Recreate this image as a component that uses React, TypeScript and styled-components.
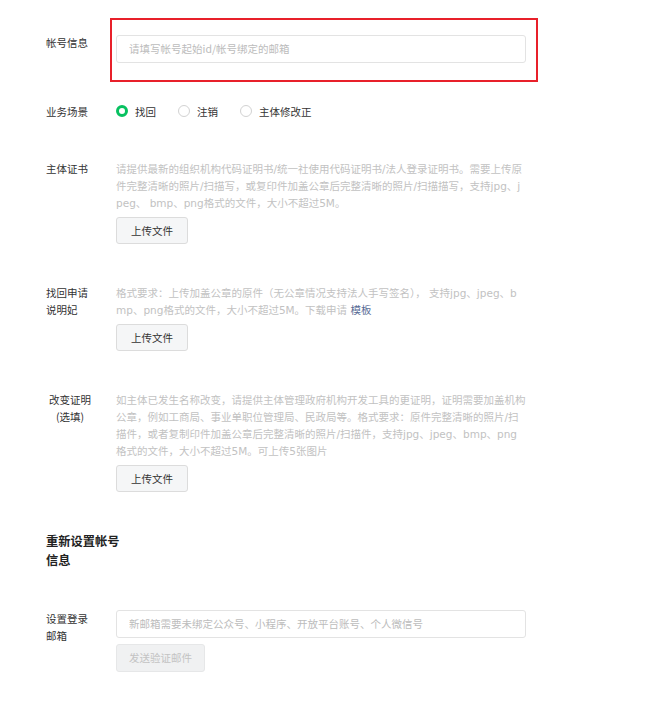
import React, { useState } from 'react';
import styled, { createGlobalStyle } from 'styled-components';

const GlobalStyle = createGlobalStyle`
  body {
    margin: 0;
    background: #fff;
    font-family: "Noto Sans CJK SC", "Noto Sans", sans-serif;
    color: #333;
  }
`;

const Form = styled.div`
  display: flex;
  flex-direction: column;
  gap: 40px;
  padding: 34px 0 40px 46px;
  width: 480px;
`;

const Row = styled.div`
  display: grid;
  grid-template-columns: 48px 410px;
  column-gap: 22px;
  align-items: start;
`;

const Label = styled.div<{ $center?: boolean }>`
  font-size: 10.5px;
  line-height: 17px;
  color: #333;
  text-align: ${({ $center }) => ($center ? 'center' : 'left')};
`;

const Heading = styled.div`
  width: 76px;
  font-size: 12.25px;
  line-height: 19px;
  font-weight: 700;
  color: #222;
`;

const Field = styled.div`
  display: flex;
  flex-direction: column;
  align-items: flex-start;
`;

const Highlight = styled.div`
  position: relative;
  width: 100%;

  &::after {
    content: '';
    position: absolute;
    top: -16px;
    right: -12px;
    bottom: -19px;
    left: -6px;
    border: 2px solid #e8202a;
    pointer-events: none;
  }
`;

const Input = styled.input`
  box-sizing: border-box;
  width: 100%;
  height: 28px;
  padding: 0 12px;
  border: 1px solid #e3e3e3;
  border-radius: 3px;
  font-family: inherit;
  font-size: 10.5px;
  color: #333;
  outline: none;

  &::placeholder {
    color: #bcbcbc;
  }
`;

const RadioGroup = styled.div`
  display: flex;
  gap: 22px;
  height: 17px;
  align-items: center;
`;

const RadioItem = styled.label`
  display: flex;
  align-items: center;
  gap: 7px;
  font-size: 10.5px;
  line-height: 17px;
  color: #333;
  cursor: pointer;
`;

const RadioDot = styled.span<{ $checked: boolean }>`
  box-sizing: border-box;
  width: 12px;
  height: 12px;
  border-radius: 50%;
  border: ${({ $checked }) => ($checked ? '3px solid #07c160' : '1px solid #d2d2d2')};
  background: #fff;
`;

/* Latin runs in the reference are about as wide as DejaVu Sans, so it goes first */
const Desc = styled.div`
  font-family: "DejaVu Sans", "Noto Sans CJK SC", sans-serif;
  font-size: 10.5px;
  line-height: 17px;
  color: #c2c2c2;
  word-break: break-all;
  padding-top: 1px;
  margin-bottom: -1px;
`;

const Link = styled.a`
  color: #576b95;
  text-decoration: none;
`;

const Button = styled.button<{ $disabled?: boolean }>`
  box-sizing: border-box;
  height: ${({ $disabled }) => ($disabled ? '28px' : '27px')};
  margin-top: 6px;
  padding: ${({ $disabled }) => ($disabled ? '0 12px' : '0 14px')};
  border: 1px solid ${({ $disabled }) => ($disabled ? '#e6e7e8' : '#dcdcdc')};
  border-radius: 3px;
  background: ${({ $disabled }) => ($disabled ? '#f0f1f2' : '#f5f6f7')};
  color: ${({ $disabled }) => ($disabled ? '#c3c3c3' : '#333')};
  font-family: inherit;
  font-size: 10.5px;
  cursor: ${({ $disabled }) => ($disabled ? 'default' : 'pointer')};
`;

const scenes = ['找回', '注销', '主体修改正'];

const App: React.FC = () => {
  const [scene, setScene] = useState('找回');

  return (
    <>
      <GlobalStyle />
      <Form>
        <Row>
          <Label>帐号信息</Label>
          <Highlight>
            <Input placeholder="请填写帐号起始id/帐号绑定的邮箱" />
          </Highlight>
        </Row>

        <Row>
          <Label>业务场景</Label>
          <RadioGroup>
            {scenes.map((s) => (
              <RadioItem key={s} onClick={() => setScene(s)}>
                <RadioDot $checked={scene === s} />
                {s}
              </RadioItem>
            ))}
          </RadioGroup>
        </Row>

        <Row>
          <Label>主体证书</Label>
          <Field>
            <Desc>
              请提供最新的组织机构代码证明书/统一社使用代码证明书/法人登录证明书。需要上传原件完整清晰的照片/扫描写，或复印件加盖公章后完整清晰的照片/扫描描写，支持jpg、jpeg、 bmp、png格式的文件，大小不超过5M。
            </Desc>
            <Button>上传文件</Button>
          </Field>
        </Row>

        <Row>
          <Label>找回申请说明妃</Label>
          <Field>
            <Desc>
              格式要求：上传加盖公章的原件（无公章情况支持法人手写签名）， 支持jpg、jpeg、bmp、png格式的文件，大小不超过5M。下载申请 <Link href="#">模板</Link>
            </Desc>
            <Button>上传文件</Button>
          </Field>
        </Row>

        <Row>
          <Label $center>改变证明 (选填)</Label>
          <Field>
            <Desc>
              如主体已发生名称改变，请提供主体管理政府机构开发工具的更证明，证明需要加盖机构公章，例如工商局、事业单职位管理局、民政局等。格式要求：原件完整清晰的照片/扫描件，或者复制印件加盖公章后完整清晰的照片/扫描件，支持jpg、jpeg、bmp、png格式的文件，大小不超过5M。可上传5张图片
            </Desc>
            <Button>上传文件</Button>
          </Field>
        </Row>

        <Heading>重新设置帐号信息</Heading>

        <Row>
          <Label>设置登录邮箱</Label>
          <Field>
            <Input placeholder="新邮箱需要未绑定公众号、小程序、开放平台账号、个人微信号" />
            <Button $disabled disabled>
              发送验证邮件
            </Button>
          </Field>
        </Row>
      </Form>
    </>
  );
};

export default App;
